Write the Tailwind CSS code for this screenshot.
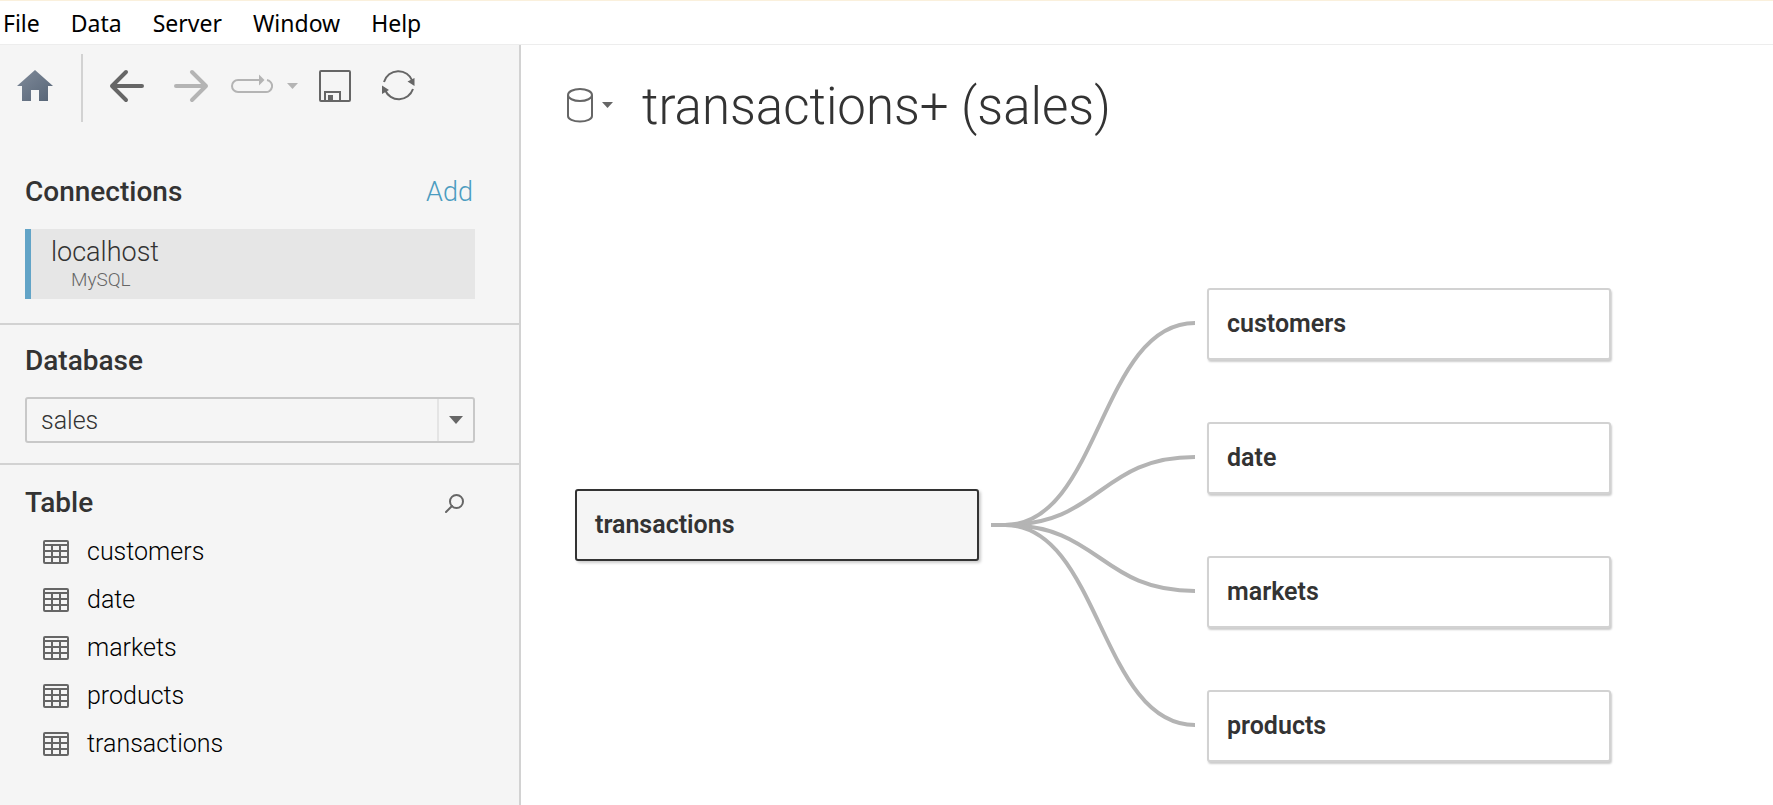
<!DOCTYPE html>
<html lang="en">
<head>
<meta charset="utf-8">
<meta name="viewport" content="width=device-width, initial-scale=1">
<title>transactions+ (sales)</title>
<script src="https://cdn.jsdelivr.net/npm/@tailwindcss/browser@4"></script>
</head>
<body class="flex min-h-screen flex-col bg-white font-['Roboto',sans-serif] text-[#333333]">

<svg class="hidden" aria-hidden="true">
  <symbol id="table" viewBox="0 0 26 24">
    <rect x="1" y="1" width="24" height="22" rx="1" fill="none" stroke="#666" stroke-width="2"/>
    <path d="M1 5h24M1 11h24M1 17h24M9 5v18M17 5v18" fill="none" stroke="#666" stroke-width="2"/>
  </symbol>
</svg>

<nav aria-label="Main menu" class="flex h-[45px] shrink-0 items-center gap-[31px] border-t border-b border-t-[#faf0dc] border-b-[#ededed] pl-[3px] font-['Noto_Sans',sans-serif] text-[23px] leading-[30px] text-black">
  <button type="button">File</button>
  <button type="button">Data</button>
  <button type="button">Server</button>
  <button type="button">Window</button>
  <button type="button">Help</button>
</nav>

<div class="flex grow">
  <aside class="flex w-[521px] shrink-0 flex-col border-r-2 border-[#d2d2d2] bg-[#f5f5f5]">
    <div role="toolbar" aria-label="Toolbar" class="flex h-[81px] items-center pl-[17px]">
      <button type="button" aria-label="Home">
        <svg class="block" width="36" height="32" viewBox="0 0 36 32">
          <defs><linearGradient id="roof" x1="0" y1="0" x2="1" y2="1"><stop offset="0" stop-color="#808b9a"/><stop offset="1" stop-color="#566476"/></linearGradient></defs>
          <path d="M18 0 36 16H31V31H22V20H14V31H5V16H0Z" fill="url(#roof)"/>
        </svg>
      </button>
      <div class="mt-1 ml-7 h-[68px] w-0.5 bg-[#d2d2d2]"></div>
      <button type="button" aria-label="Back" class="ml-[26px]">
        <svg class="block" width="36" height="34" viewBox="0 0 36 34" fill="none" stroke="#666" stroke-width="4" stroke-linecap="round" stroke-linejoin="round"><path d="M33 17H3M17 3 3 17 17 31"/></svg>
      </button>
      <button type="button" aria-label="Forward" class="ml-7" disabled>
        <svg class="block" width="36" height="34" viewBox="0 0 36 34" fill="none" stroke="#b4b4b4" stroke-width="4" stroke-linecap="round" stroke-linejoin="round"><path d="M3 17H33M19 3 33 17 19 31"/></svg>
      </button>
      <button type="button" aria-label="Replay" class="ml-[22px]" disabled>
        <svg class="block" width="42" height="28" viewBox="0 0 42 28" fill="none" stroke="#b4b4b4" stroke-width="2"><path d="M28 8H7a6 6 0 0 0 0 12H34a6 6 0 0 0 2-12"/><path d="M28 2.500 33.500 8 28 13.500Z" fill="#b4b4b4" stroke="none"/></svg>
      </button>
      <button type="button" aria-label="Replay options" class="ml-3.5" disabled>
        <svg class="block" width="12" height="6" viewBox="0 0 12 6"><path d="M0 0H11L5.500 6Z" fill="#b4b4b4"/></svg>
      </button>
      <button type="button" aria-label="Save" class="ml-5">
        <svg class="block" width="32" height="32" viewBox="0 0 32 32" fill="none" stroke="#666" stroke-width="2"><rect x="1" y="1" width="30" height="30" rx="1"/><path d="M6 31V22H21V31"/><path d="M9 25h5v6H9Z" fill="#666" stroke="none"/></svg>
      </button>
      <button type="button" aria-label="Refresh" class="ml-[30px]">
        <svg class="block" width="36" height="32" viewBox="0 0 36 32" fill="none" stroke="#666" stroke-width="2"><path d="M3 12A15 15 0 0 1 31.500 11M32 19A15 15 0 0 1 4 20"/><path d="M26.500 11.500 33.500 8V16Z M1 15.500 8 20 1 24Z" fill="#666" stroke="none"/></svg>
      </button>
    </div>

    <section class="border-b-2 border-[#d2d2d2] pt-[50px] pr-11 pb-6 pl-[25px]">
      <div class="flex h-8 items-center justify-between pr-[2px]">
        <h2 class="text-[28px] leading-8 font-medium">Connections</h2>
        <a href="#" class="text-[27px] leading-8 font-light text-[#4b9cc0]">Add</a>
      </div>
      <button type="button" class="mt-[21px] block h-[70px] w-full border-l-[6px] border-[#62a4c7] bg-[#e6e6e6] pl-5 text-left">
        <span class="block text-[27px] leading-8 font-light">localhost</span>
        <span class="block pl-5 text-[19px] leading-6 font-light text-[#666666]">MySQL</span>
      </button>
    </section>

    <section class="border-b-2 border-[#d2d2d2] pt-5 pr-11 pb-5 pl-[25px]">
      <label for="db" class="block text-[28px] leading-8 font-medium">Database</label>
      <div class="relative mt-5">
        <select id="db" class="block h-[46px] w-full appearance-none rounded-[3px] border-2 border-[#c8c8c8] bg-[#f5f5f5] pt-0.5 pl-3.5 text-[25px] leading-8 font-light">
          <option>sales</option>
        </select>
        <span class="pointer-events-none absolute inset-y-0.5 right-0.5 flex w-9 items-center justify-center border-l-2 border-[#e4e4e4]">
          <svg width="14" height="8" viewBox="0 0 14 8"><path d="M0 0H14L7 8Z" fill="#666"/></svg>
        </span>
      </div>
    </section>

    <section class="pt-[22px] pr-11 pl-[25px]">
      <div class="flex items-center justify-between pr-[11px]">
        <h2 class="text-[28px] leading-8 font-medium">Table</h2>
        <button type="button" aria-label="Search tables">
          <svg class="block" width="19" height="19" viewBox="0 0 19 19" fill="none" stroke="#666" stroke-width="2" stroke-linecap="round"><circle cx="11.500" cy="7.500" r="6.500"/><path d="M7 12 1 18"/></svg>
        </button>
      </div>
      <ul class="mt-[9px] pl-[18px] text-[25px] leading-[48px] font-[350] text-black">
        <li class="flex items-center gap-[18px]"><svg width="26" height="24"><use href="#table"/></svg>customers</li>
        <li class="flex items-center gap-[18px]"><svg width="26" height="24"><use href="#table"/></svg>date</li>
        <li class="flex items-center gap-[18px]"><svg width="26" height="24"><use href="#table"/></svg>markets</li>
        <li class="flex items-center gap-[18px]"><svg width="26" height="24"><use href="#table"/></svg>products</li>
        <li class="flex items-center gap-[18px]"><svg width="26" height="24"><use href="#table"/></svg>transactions</li>
      </ul>
    </section>
  </aside>

  <main class="grow">
    <header class="flex items-center pt-8 pl-[45px]">
      <button type="button" aria-label="Data source menu" class="flex items-center gap-2 pb-1">
        <svg width="28" height="36" viewBox="0 0 28 36" fill="none" stroke="#666" stroke-width="2"><ellipse cx="14" cy="8" rx="12" ry="6"/><path d="M2 8V29C2 32 7 34.500 14 34.500S26 32 26 29V8"/></svg>
        <svg width="12" height="6" viewBox="0 0 12 6"><path d="M0 0H11L5.500 6Z" fill="#666"/></svg>
      </button>
      <h1 class="ml-[28px] text-[51px] leading-[60px] font-light">transactions+ (sales)</h1>
    </header>

    <div class="mt-[151px] flex items-center pl-[54px] text-[25px] leading-8 font-semibold">
      <div class="flex h-[72px] w-[404px] items-center rounded-[3px] border-2 border-[#333333] bg-[#f5f5f5] pl-[18px] shadow-[2px_2px_3px_rgba(0,0,0,0.2)]">transactions</div>
      <svg class="shrink-0" width="228" height="474" viewBox="0 0 228 474" fill="none" stroke="#b4b4b4" stroke-width="4" aria-hidden="true">
        <path d="M12 237H26C121 237 121 35 216 35"/>
        <path d="M12 237H26C121 237 121 169 216 169"/>
        <path d="M12 237H26C121 237 121 303 216 303"/>
        <path d="M12 237H26C121 237 121 437 216 437"/>
      </svg>
      <div class="flex w-[404px] flex-col gap-[62px]">
        <div class="flex h-[72px] items-center rounded-[3px] border-2 border-[#d2d2d2] bg-white pl-[18px] shadow-[1px_2px_2px_rgba(0,0,0,0.2)]">customers</div>
        <div class="flex h-[72px] items-center rounded-[3px] border-2 border-[#d2d2d2] bg-white pl-[18px] shadow-[1px_2px_2px_rgba(0,0,0,0.2)]">date</div>
        <div class="flex h-[72px] items-center rounded-[3px] border-2 border-[#d2d2d2] bg-white pl-[18px] shadow-[1px_2px_2px_rgba(0,0,0,0.2)]">markets</div>
        <div class="flex h-[72px] items-center rounded-[3px] border-2 border-[#d2d2d2] bg-white pl-[18px] shadow-[1px_2px_2px_rgba(0,0,0,0.2)]">products</div>
      </div>
    </div>
  </main>
</div>
</body>
</html>
